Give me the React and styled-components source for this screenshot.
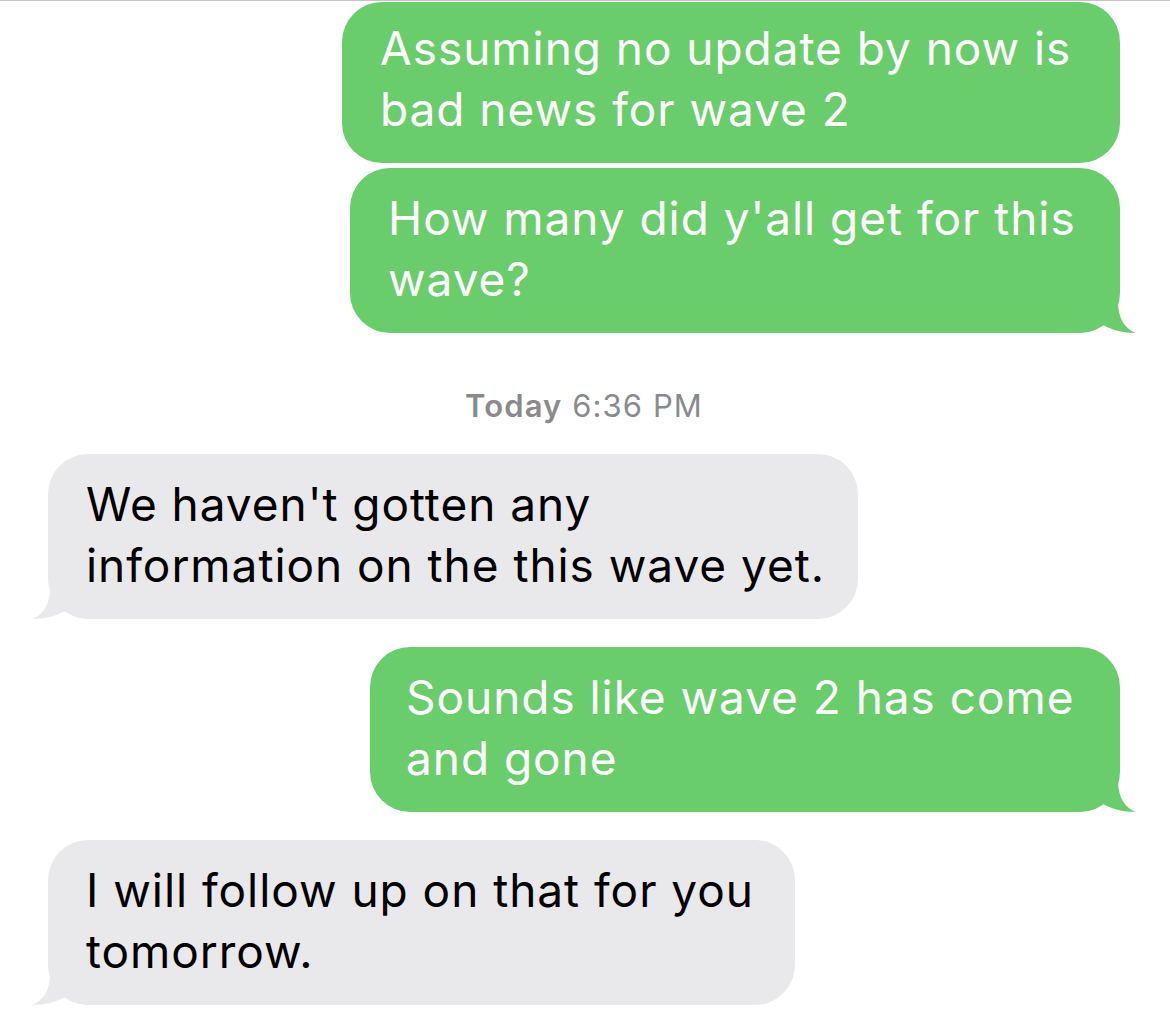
import React from "react";
import styled, { createGlobalStyle } from "styled-components";

const GlobalStyle = createGlobalStyle`
    html, body {
        margin: 0;
        padding: 0;
        background: #ffffff;
        overflow: hidden;
    }
    body {
        font-family: Inter, "Liberation Sans", Arial, sans-serif;
        -webkit-font-smoothing: antialiased;
    }
`;

const GREEN = "#6acd6c";
const GREY = "#e9e9eb";

const Thread = styled.div`
    display: flex;
    flex-direction: column;
    width: 1170px;
    height: 1011px;
    box-sizing: border-box;
    border-top: 1px solid #c4c4c4;
    padding: 0 50px 0 48px;
`;

const Row = styled.div`
    display: flex;
    justify-content: ${(p) => (p.$sent ? "flex-end" : "flex-start")};
    margin-top: ${(p) => p.$gap || 0}px;
`;

const Bubble = styled.div`
    position: relative;
    box-sizing: border-box;
    width: ${(p) => p.$width}px;
    padding: ${(p) => p.$top || 20}px 0 23px ${(p) => p.$indent || 38}px;
    border-radius: 40px;
    background: ${(p) => (p.$sent ? GREEN : GREY)};
    color: ${(p) => (p.$sent ? "#ffffff" : "#000000")};
    font-size: 46px;
    line-height: 61px;
    letter-spacing: 0.95px;
    white-space: nowrap;
`;

const Text = styled.div`
    position: relative;
    z-index: 1;
`;

const Tail = styled.svg`
    position: absolute;
    bottom: 0;
    width: 70px;
    height: 50px;
    ${(p) => (p.$sent ? "right: -18px;" : "left: -18px; transform: scaleX(-1);")}
`;

const Stamp = styled.div`
    margin: 55px 0 30px;
    text-align: center;
    color: #8a8a8e;
    font-size: 31px;
    line-height: 36px;
    letter-spacing: 1.1px;

    b {
        font-weight: 600;
    }
`;

const BubbleTail = ({ sent }) => (
    <Tail $sent={sent} viewBox="0 0 70 50">
        <path
            d="M0 0 L50 0 L50 18 C50 36 57 46 68 50 C56 50 42 47 32 40 C26 46 18 50 8 50 L0 50 Z"
            fill={sent ? GREEN : GREY}
        />
    </Tail>
);

const Message = ({ sent, width, indent, top, gap, tail, lines }) => (
    <Row $sent={sent} $gap={gap}>
        <Bubble $sent={sent} $width={width} $indent={indent} $top={top}>
            <Text>
                {lines.map((line, i) => (
                    <div key={i}>{line}</div>
                ))}
            </Text>
            {tail && <BubbleTail sent={sent} />}
        </Bubble>
    </Row>
);

const App = () => (
    <>
        <GlobalStyle />
        <Thread>
            <Message
                sent
                top={16}
                gap={1}
                width={778}
                lines={["Assuming no update by now is", "bad news for wave 2"]}
            />
            <Message
                sent
                tail
                gap={5}
                width={770}
                lines={["How many did y'all get for this", "wave?"]}
            />
            <Stamp>
                <b>Today</b> 6:36 PM
            </Stamp>
            <Message
                tail
                width={810}
                lines={["We haven't gotten any", "information on the this wave yet."]}
            />
            <Message
                sent
                tail
                gap={28}
                width={750}
                indent={36}
                lines={["Sounds like wave 2 has come", "and gone"]}
            />
            <Message
                tail
                gap={28}
                width={747}
                lines={["I will follow up on that for you", "tomorrow."]}
            />
        </Thread>
    </>
);

export default App;
